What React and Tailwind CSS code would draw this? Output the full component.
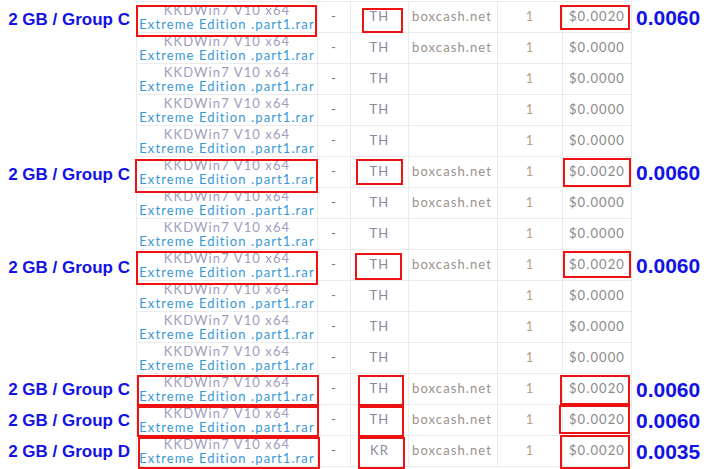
import React from "react";

const rows = [
  { label: "2 GB / Group C", value: "0.0060", host: true, lo: true },
  { host: true },
  {},
  {},
  {},
  { label: "2 GB / Group C", value: "0.0060", host: true, lo: true },
  { host: true },
  {},
  { label: "2 GB / Group C", value: "0.0060", host: true, lo: true },
  {},
  {},
  {},
  { label: "2 GB / Group C", value: "0.0060", host: true },
  { label: "2 GB / Group C", value: "0.0060", host: true },
  { label: "2 GB / Group D", value: "0.0035", host: true, country: "KR" },
];

const boxes = [
  [136, 5, 317, 37], [362, 8, 403, 33], [560, 5, 630, 30],
  [135, 159, 318, 193], [356, 159, 403, 185], [563, 158, 631, 187],
  [136, 251, 318, 285], [355, 253, 402, 280], [563, 251, 631, 278],
  [137, 375, 319, 406], [358, 375, 404, 406], [560, 375, 630, 405],
  [137, 406, 319, 437], [358, 406, 404, 437], [559, 405, 630, 434],
  [138, 437, 320, 469], [358, 437, 405, 469], [560, 435, 630, 469],
];

function Row({ r }) {
  const cell = "h-full border-r border-[#ebebeb] flex items-center";
  return (
    <div className="flex h-[31px]">
      <div
        className={
          "w-[136px] shrink-0 flex items-center justify-end pr-[6px] text-[17px] font-bold text-[#1212e6] font-['Liberation_Sans',Arial,sans-serif] " +
          (r.lo ? "pt-[5px]" : "")
        }
      >
        {r.label || ""}
      </div>
      <div className="flex border-l border-b border-[#ebebeb] h-[31px] font-['Lato',sans-serif] text-[13px] tracking-[1.1px]">
        <div className={cell + " w-[181px] flex-col justify-center leading-[14px] text-center pb-[1px]"}>
          <span className="text-[#a19dbd]">KKDWin7 V10 x64</span>
          <span className="text-[#3898d6]">Extreme Edition .part1.rar</span>
        </div>
        <div className={cell + " w-[33px] justify-center text-[#7a7a7a]"}>-</div>
        <div className={cell + " w-[58px] justify-center text-[#8d879e]"}>{r.country || "TH"}</div>
        <div className={cell + " w-[89px] pl-[3px] text-[#9a918c]"}>{r.host ? "boxcash.net" : ""}</div>
        <div className={cell + " w-[65px] justify-center text-[#bba07f]"}>1</div>
        <div className={cell + " w-[69px] justify-end pr-[6px] text-[#8a8a8a]"}>
          {r.label ? "$0.0020" : "$0.0000"}
        </div>
      </div>
      <div className="flex items-center pl-[4px] text-[21px] font-bold text-[#1212e6] font-['Liberation_Sans',Arial,sans-serif]">
        {r.value || ""}
      </div>
    </div>
  );
}

export default function App() {
  return (
    <div className="relative w-[712px] h-[469px] bg-white overflow-hidden">
      <div className="pt-[1px]">
        <div className="ml-[136px] w-[496px] border-t border-[#ebebeb]" />
        {rows.map((r, i) => (
          <Row key={i} r={r} />
        ))}
      </div>
      {boxes.map(([x1, y1, x2, y2], i) => (
        <div
          key={i}
          className="absolute border-2 border-[#ee1111]"
          style={{ left: x1, top: y1, width: x2 - x1, height: y2 - y1 }}
        />
      ))}
    </div>
  );
}
